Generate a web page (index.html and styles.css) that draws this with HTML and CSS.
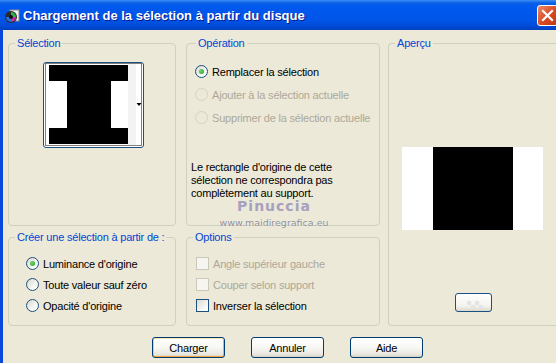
FILE: index.html
```html
<!DOCTYPE html>
<html>
  <head>
    <meta charset="utf-8">
    <title>Chargement de la sélection à partir du disque</title>
    <link rel="stylesheet" href="styles.css">
  </head>
  <body>
    <div class="window">
      <div class="titlebar">
        <svg class="app-icon" width="16" height="16" viewBox="0 0 16 16">
          <rect x="6" y="2" width="9" height="11" fill="#f2f2f2" stroke="#8a8a8a"/>
          <circle cx="7" cy="9" r="6" fill="#2b2b2b"/>
          <path d="M7 4 A5 5 0 0 1 12 9 L7 9 Z" fill="#2fb34a"/>
          <path d="M7 9 L12 9 A5 5 0 0 1 7 14 Z" fill="#c02ea8"/>
          <path d="M7 9 L7 14 A5 5 0 0 1 2 9 Z" fill="#2a6fd6"/>
          <circle cx="7" cy="9" r="2" fill="#111"/>
        </svg>
        <span class="title">Chargement de la sélection à partir du disque</span>
        <span class="close-btn">
          <svg width="13" height="13" viewBox="0 0 13 13">
            <path d="M2 2 L11 11 M11 2 L2 11" stroke="#fff" stroke-width="2.2" stroke-linecap="square"/>
          </svg>
        </span>
      </div>

      <div class="body">
        <div class="groups">
          <fieldset class="group g-selection">
            <legend>Sélection</legend>
            <div class="thumb-btn">
              <svg width="99" height="84" viewBox="0 0 99 84">
                <rect x="84" y="1" width="8" height="81" fill="#f3f3f3"/>
                <rect x="5" y="2" width="79" height="16" fill="#000"/>
                <rect x="23" y="18" width="44" height="47" fill="#000"/>
                <rect x="5" y="65" width="79" height="16" fill="#000"/>
                <rect x="1.5" y="0.5" width="96" height="82" fill="none" stroke="#000" stroke-dasharray="1 1"/>
                <polygon points="92.5,40 97.5,40 95,43" fill="#000"/>
              </svg>
            </div>
          </fieldset>

          <fieldset class="group g-operation">
            <legend>Opération</legend>
            <div class="option-list op-list">
              <label class="option"><span class="radio checked"></span>Remplacer la sélection</label>
              <label class="option disabled"><span class="radio"></span>Ajouter à la sélection actuelle</label>
              <label class="option disabled"><span class="radio"></span>Supprimer de la sélection actuelle</label>
            </div>
            <p class="note">Le rectangle d'origine de cette<br>sélection ne correspondra pas<br>complètement au support.</p>
          </fieldset>

          <fieldset class="group g-preview">
            <legend>Aperçu</legend>
            <div class="preview"><div class="preview-black"></div></div>
            <div class="mini-btn">
              <svg width="35" height="17" viewBox="0 0 35 17">
                <rect x="11" y="7" width="4" height="4" fill="#e4e4e4"/>
                <rect x="19" y="7" width="4" height="4" fill="#e4e4e4"/>
                <rect x="15" y="11" width="4" height="4" fill="#e4e4e4"/>
                <rect x="23" y="11" width="4" height="4" fill="#e4e4e4"/>
              </svg>
            </div>
          </fieldset>

          <fieldset class="group g-create">
            <legend>Créer une sélection à partir de :</legend>
            <div class="option-list create-list">
              <label class="option"><span class="radio checked"></span>Luminance d'origine</label>
              <label class="option"><span class="radio"></span>Toute valeur sauf zéro</label>
              <label class="option"><span class="radio"></span>Opacité d'origine</label>
            </div>
          </fieldset>

          <fieldset class="group g-options">
            <legend>Options</legend>
            <div class="option-list create-list">
              <label class="option disabled"><span class="check"></span>Angle supérieur gauche</label>
              <label class="option disabled"><span class="check"></span>Couper selon support</label>
              <label class="option"><span class="check"></span>Inverser la sélection</label>
            </div>
          </fieldset>
        </div>

        <div class="buttons">
          <button class="btn default">Charger</button>
          <button class="btn">Annuler</button>
          <button class="btn">Aide</button>
        </div>

        <div class="watermark">
          <div class="wm-name">Pinuccia</div>
          <div class="wm-url">www.maidiregrafica.eu</div>
        </div>
      </div>
    </div>
  </body>
</html>
```

FILE: styles.css
```css
body {
  margin: 0;
  padding: 0;
  background-color: #ece9d8;
  font-family: "Liberation Sans", Arial, sans-serif;
  font-size: 11px;
  letter-spacing: -0.2px;
  color: #000;
  overflow: hidden;
}

.window {
  width: 556px;
  height: 363px;
  background-color: #ece9d8;
}

/* title bar */
.titlebar {
  height: 30px;
  display: flex;
  align-items: center;
  background: linear-gradient(#3d8ff5 0, #0a5fe6 3px, #0058ee 7px, #0055e8 20px, #0049d3 27px, #003fbd 30px);
}
.app-icon {
  margin-left: 4px;
  margin-right: 3px;
  margin-top: 1px;
}
.title {
  color: #fff;
  font-weight: bold;
  font-size: 13px;
  letter-spacing: 0;
  text-shadow: 1px 1px #0a1a8a;
}
.close-btn {
  margin-left: auto;
  margin-right: -2px;
  width: 19px;
  height: 19px;
  border: 1px solid #fff;
  border-radius: 3px;
  background: linear-gradient(135deg, #ec8a6c, #d9481f 55%, #c0371a);
  display: flex;
  align-items: center;
  justify-content: center;
}

/* body */
.body {
  position: relative;
  height: 333px;
  border-left: 3px solid #0a48dc;
  box-sizing: border-box;
  padding: 7px 0 0 5px;
}

.groups {
  display: grid;
  grid-template-columns: 168px 10px 194px 8px 1fr;
  grid-template-rows: 189px 95px;
  row-gap: 5px;
}

.group {
  margin: 0;
  padding: 0;
  min-width: 0;
  border: 1px solid #d0d0bf;
  border-radius: 4px;
}
.group legend {
  margin-left: 6px;
  padding: 0 2px;
  line-height: 13px;
  color: #0046d5;
}

.g-selection { grid-column: 1; grid-row: 1; }
.g-operation { grid-column: 3; grid-row: 1; padding-left: 3px; }
.g-preview { grid-column: 5; grid-row: 1 / 3; border-right: none; border-radius: 4px 0 0 4px; }
.g-create { grid-column: 1; grid-row: 2; }
.g-options { grid-column: 3; grid-row: 2; }

/* thumbnail dropdown */
.thumb-btn {
  width: 99px;
  height: 84px;
  margin: 12px 0 0 34px;
  border: 1px solid #1c5180;
  border-radius: 3px;
  background-color: #fff;
}
.thumb-btn svg {
  display: block;
}

/* radios and checkboxes */
.option-list {
  display: flex;
  flex-direction: column;
}
.op-list {
  margin: 14px 0 0 5px;
  gap: 8px;
}
.create-list {
  margin: 12px 0 0 17px;
  gap: 6px;
}
.g-options .create-list {
  margin-left: 9px;
}
.option {
  display: flex;
  align-items: center;
  height: 15px;
  gap: 4px;
  white-space: nowrap;
}
.option.disabled {
  color: #aca899;
}
.radio {
  position: relative;
  width: 11px;
  height: 11px;
  border: 1px solid #1c5180;
  border-radius: 50%;
  background: linear-gradient(135deg, #d8d6cc, #f6f6f2 60%, #fff);
  flex-shrink: 0;
}
.radio.checked::after {
  content: "";
  position: absolute;
  left: 3px;
  top: 3px;
  width: 5px;
  height: 5px;
  border-radius: 50%;
  background: radial-gradient(circle at 40% 40%, #6fd66f, #21a121);
}
.disabled .radio {
  border-color: #d6d3c4;
  background: #ece9d8;
}
.check {
  width: 11px;
  height: 11px;
  border: 1px solid #1c5180;
  background: linear-gradient(135deg, #dcdcd5, #f8f8f5 70%, #fff);
  flex-shrink: 0;
}
.disabled .check {
  border-color: #cac8bb;
  background: #f6f5f0;
}

.note {
  margin: 36px 0 0 1px;
  line-height: 13px;
}

/* preview */
.preview {
  display: flex;
  width: 141px;
  height: 83px;
  margin: 97px 0 0 13px;
  background-color: #fff;
}
.preview-black {
  width: 80px;
  margin-left: 31px;
  background-color: #000;
}
.mini-btn {
  width: 35px;
  height: 17px;
  margin: 63px 0 0 66px;
  border: 1px solid #1c4f86;
  border-radius: 3px;
  background: linear-gradient(#fff, #f3f3ee 70%, #dcd8cc);
}
.mini-btn svg {
  display: block;
}

/* bottom buttons */
.buttons {
  display: flex;
  justify-content: center;
  gap: 26px;
  margin-top: 11px;
  padding-left: 11px;
}
.btn {
  width: 73px;
  height: 21px;
  padding: 0;
  font-family: "Liberation Sans", Arial, sans-serif;
  font-size: 11px;
  letter-spacing: -0.2px;
  color: #000;
  border: 1px solid #003c74;
  border-radius: 3px;
  background: linear-gradient(#fff, #f7f7f4 50%, #eae8e0 85%, #d6d0c5);
}
.btn.default {
  box-shadow: inset 0 -1px #f0a43a, inset 0 1px #fce3b2, inset 1px 0 #fbc66e, inset -1px 0 #f5b04a;
}

/* watermark over the dialog */
.watermark {
  position: absolute;
  left: 211px;
  top: 170px;
  width: 120px;
  text-align: center;
  pointer-events: none;
}
.wm-name {
  font-family: "DejaVu Sans", sans-serif;
  font-weight: bold;
  font-size: 14px;
  letter-spacing: 1px;
  color: #a7a1bf;
  line-height: 12px;
}
.wm-url {
  margin-top: 5px;
  font-family: "DejaVu Sans", sans-serif;
  font-size: 9.5px;
  letter-spacing: 0;
  color: #8e8e96;
  line-height: 12px;
  text-shadow: 0 0 1px #fff;
}
```
